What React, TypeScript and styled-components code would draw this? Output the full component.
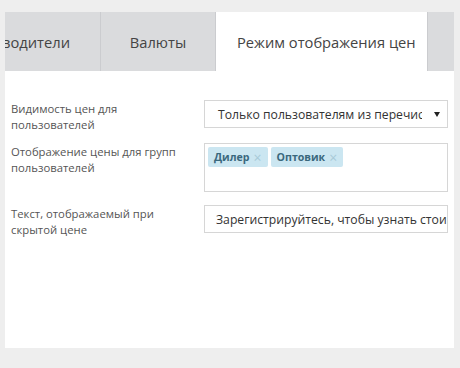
import React from 'react'
import styled, { createGlobalStyle } from 'styled-components'

const Global = createGlobalStyle`
  html, body {
    margin: 0;
    padding: 0;
    background: #eeeeee;
  }
  body {
    font-family: "Open Sans", "Liberation Sans", sans-serif;
  }
`

const Page = styled.div`
  width: 460px;
  height: 368px;
  box-sizing: border-box;
  padding: 12px 6px 0 5px;
  background: #eeeeee;
`

const Frame = styled.div`
  display: flex;
  flex-direction: column;
  width: 449px;
`

const TabStrip = styled.div`
  display: flex;
  height: 59px;
  overflow: hidden;
  gap: 1px;
  background: #cbcccf;
`

const Tab = styled.div<{ $width: number; $active?: boolean }>`
  flex: 0 0 ${(p) => p.$width}px;
  display: flex;
  align-items: center;
  justify-content: ${(p) => (p.$active ? 'flex-start' : 'center')};
  box-sizing: border-box;
  padding: ${(p) => (p.$active ? '0 0 0 21px' : '0')};
  overflow: hidden;
  white-space: nowrap;
  font-size: 14.7px;
  color: #444;
  background: ${(p) => (p.$active ? '#ffffff' : '#dadbdd')};
`

const ClippedTab = styled(Tab)`
  justify-content: flex-end;
  padding-right: 30px;
`

const Panel = styled.div`
  display: flex;
  flex-direction: column;
  gap: 10px;
  height: 277px;
  box-sizing: border-box;
  padding: 29px 6px;
  background: #ffffff;
`

const Row = styled.div`
  display: grid;
  grid-template-columns: 193px 1fr;
  align-items: start;
`

const Label = styled.div`
  padding: 1px 0 0 0;
  font-size: 11.3px;
  line-height: 16px;
  color: #555;
`

const Field = styled.div<{ $tall?: boolean }>`
  display: flex;
  align-items: ${(p) => (p.$tall ? 'flex-start' : 'center')};
  box-sizing: border-box;
  height: ${(p) => (p.$tall ? 49 : 28)}px;
  margin-bottom: ${(p) => (p.$tall ? 3 : 0)}px;
  border: 1px solid #d6d6d6;
  background: #fff;
  font-size: 12.2px;
  color: #333;
  overflow: hidden;
  white-space: nowrap;
`

const SelectText = styled.span`
  flex: 1;
  overflow: hidden;
  padding-left: 13px;
  margin-right: 12px;
`

const Arrow = styled.span`
  width: 0;
  height: 0;
  margin-right: 7px;
  border-left: 3px solid transparent;
  border-right: 3px solid transparent;
  border-top: 5px solid #222;
`

const InputText = styled.span`
  padding-left: 11px;
`

const Tags = styled.div`
  display: flex;
  gap: 3px;
  padding: 3px;
`

const Tag = styled.span`
  display: flex;
  align-items: center;
  gap: 4px;
  height: 20px;
  padding: 0 6px;
  border-radius: 2px;
  background: #cbe6f1;
  font-size: 10.6px;
  font-weight: 700;
  color: #3a687d;
`

const Remove = styled.span`
  font-size: 14px;
  font-weight: 400;
  color: #a8cad8;
`

export default function App() {
  return (
    <Page>
      <Global />
      <Frame>
        <TabStrip>
          <ClippedTab $width={95}>Производители</ClippedTab>
          <Tab $width={114}>Валюты</Tab>
          <Tab $width={211} $active>Режим отображения цен</Tab>
          <Tab $width={40} />
        </TabStrip>
        <Panel>
          <Row>
            <Label>Видимость цен для<br />пользователей</Label>
            <Field>
              <SelectText>Только пользователям из перечисленных групп</SelectText>
              <Arrow />
            </Field>
          </Row>
          <Row>
            <Label>Отображение цены для групп<br />пользователей</Label>
            <Field $tall>
              <Tags>
                <Tag>Дилер<Remove>×</Remove></Tag>
                <Tag>Оптовик<Remove>×</Remove></Tag>
              </Tags>
            </Field>
          </Row>
          <Row>
            <Label>Текст, отображаемый при<br />скрытой цене</Label>
            <Field>
              <InputText>Зарегистрируйтесь, чтобы узнать стоимость</InputText>
            </Field>
          </Row>
        </Panel>
      </Frame>
    </Page>
  )
}
